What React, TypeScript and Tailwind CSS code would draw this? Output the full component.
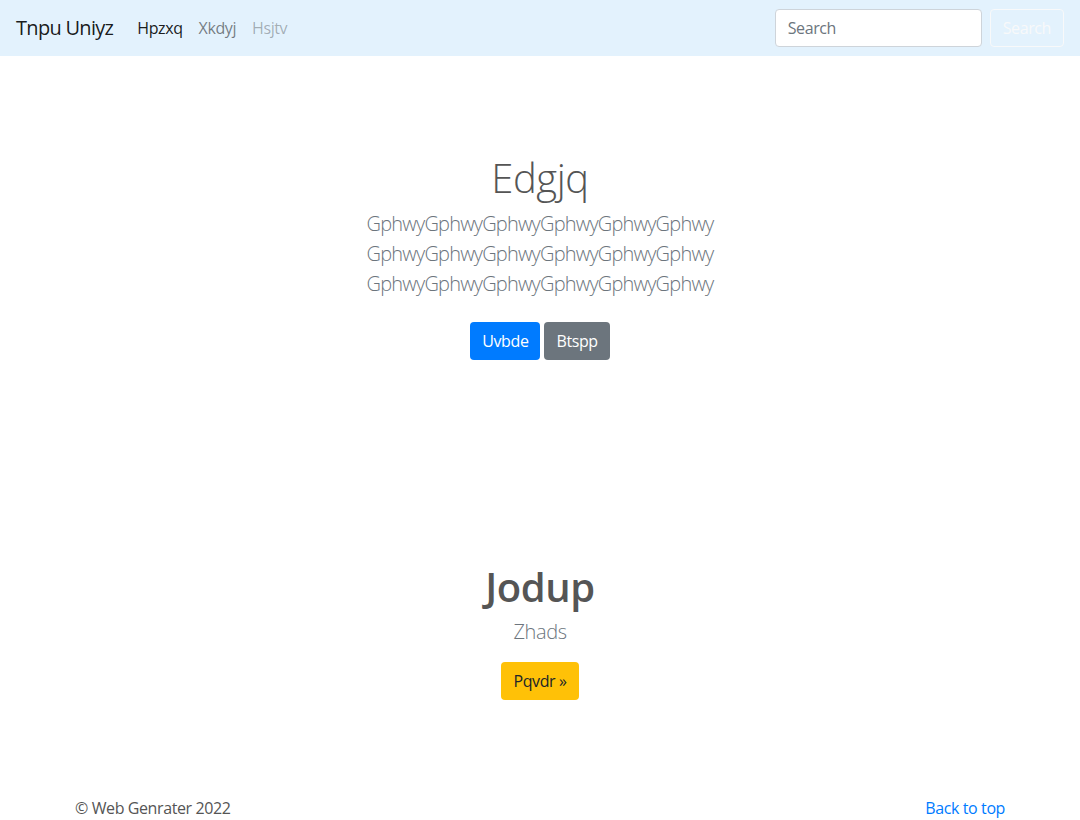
const LINE = "GphwyGphwyGphwyGphwyGphwyGphwy";

export default function App() {
  return (
    <div className="min-h-[820px] bg-white font-['Segoe_UI','Open_Sans',sans-serif] text-[16px] leading-6 tracking-[-0.025em] text-[#212529]">
      <nav className="flex h-14 items-center bg-[#e3f2fd] px-4">
        <a className="mr-4 text-[20px] leading-[30px] tracking-[-0.035em] text-black/90">Tnpu Uniyz</a>
        <ul className="flex items-center">
          <li className="px-2 text-black/90">Hpzxq</li>
          <li className="px-2 text-black/50">Xkdyj</li>
          <li className="px-2 text-black/30">Hsjtv</li>
        </ul>
        <form className="ml-auto flex items-center">
          <input
            placeholder="Search"
            className="h-[38px] w-[207px] rounded border border-[#ced4da] bg-white px-3 text-[16px] text-[#495057] placeholder:text-[#6c757d] outline-none"
          />
          <button className="ml-2 h-[38px] rounded border border-[#f8f9fa] px-3 text-[16px] text-[#f8f9fa]">
            Search
          </button>
        </form>
      </nav>

      <section className="pt-[98px] text-center">
        <h1 className="mb-[7px] text-[40px] font-light leading-[48px] tracking-[-0.01em] text-[#555]">Edgjq</h1>
        <p className="text-[20px] font-light leading-[30px] tracking-[-0.04em] text-[#6c757d]">
          <span className="block">{LINE}</span>
          <span className="block">{LINE}</span>
          <span className="block">{LINE}</span>
        </p>
        <div className="mt-[23px] flex justify-center gap-1">
          <a className="h-[38px] rounded bg-[#007bff] px-3 py-[7px] text-white">Uvbde</a>
          <a className="h-[38px] rounded bg-[#6c757d] px-3 py-[7px] text-white">Btspp</a>
        </div>
      </section>

      <section className="pt-[203px] text-center">
        <h2 className="text-[40px] font-semibold leading-[48px] tracking-[-0.01em] text-[#555]">Jodup</h2>
        <p className="mt-[6px] text-[20px] font-light leading-[30px] text-[#6c757d]">Zhads</p>
        <div className="mt-[15px] flex justify-center">
          <a className="h-[38px] rounded bg-[#ffc107] px-3 py-[7px] text-[#212529]">Pqvdr »</a>
        </div>
      </section>

      <footer className="mx-auto mt-[96px] flex w-[960px] justify-between px-[15px]">
        <p className="text-[#555]">© Web Genrater 2022</p>
        <a className="text-[#007bff]">Back to top</a>
      </footer>
    </div>
  );
}
